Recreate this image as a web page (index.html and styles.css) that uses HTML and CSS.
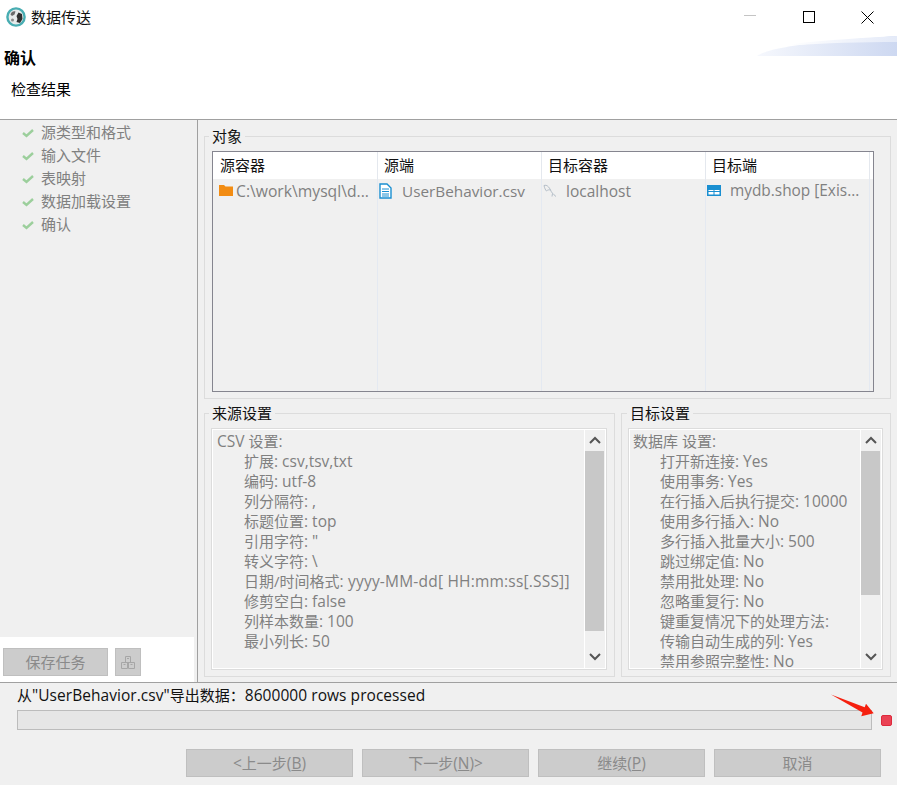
FILE: index.html
```html
<!DOCTYPE html>
<html lang="zh">
<head>
<meta charset="utf-8">
<title>数据传送</title>
<link rel="stylesheet" href="styles.css">
</head>
<body>
<div class="window">
  <header class="header">
    <svg class="swoosh" width="140" height="20" viewBox="0 0 140 20" aria-hidden="true">
      <defs>
        <linearGradient id="sw" x1="0" x2="1" y1="0" y2="0"><stop offset="0" stop-color="#f6f8fd"/><stop offset="1" stop-color="#cdd8f1"/></linearGradient>
        <linearGradient id="sw2" x1="0" x2="1" y1="0" y2="0"><stop offset="0" stop-color="#ffffff"/><stop offset="1" stop-color="#e4eaf8"/></linearGradient>
      </defs>
      <path d="M0 20 C12 12 43 7 140 0 V20 Z" fill="url(#sw)"/>
      <path d="M43 7 C70 4 105 2 140 0 V6 C105 6 70 7 30 9.5 Z" fill="url(#sw2)"/>
    </svg>
    <div class="titlebar">
      <svg class="app-icon" width="20" height="20" viewBox="0 0 20 20" aria-hidden="true">
        <circle cx="10" cy="10" r="8.6" fill="#e6eaea" stroke="#48adb2" stroke-width="2.4"/>
        <path d="M4.5 7.5 C5 4.5 8 3.5 9.5 4.5 L8.5 7.5 L6 9 Z" fill="#6a6a6a"/>
        <path d="M10.5 9 L12.5 5.5 L16 7 L16.5 12 L14 16 L10.5 15 L11.5 12 Z" fill="#2f2f2f"/>
        <circle cx="6.5" cy="13" r="1.5" fill="#8a8a8a"/>
      </svg>
      <span class="title">数据传送</span>
      <div class="win-controls">
        <svg class="win-btn" width="13" height="13" viewBox="0 0 13 13" aria-hidden="true"><path d="M0 4.5 H12" stroke="#c4c4c4" stroke-width="1"/></svg>
        <svg class="win-btn" width="13" height="13" viewBox="0 0 13 13" aria-hidden="true"><rect x="0.5" y="0.5" width="11" height="11" fill="none" stroke="#000" stroke-width="1"/></svg>
        <svg class="win-btn" width="13" height="13" viewBox="0 0 13 13" aria-hidden="true"><path d="M0.5 0.5 L12.5 12.5 M12.5 0.5 L0.5 12.5" stroke="#000" stroke-width="1"/></svg>
      </div>
    </div>
    <h1 class="page-title">确认</h1>
    <p class="page-sub">检查结果</p>
  </header>

  <div class="main">
    <aside class="sidebar">
      <ul class="steps">
        <li class="step"><svg class="check" width="12" height="10" viewBox="0 0 12 10" aria-hidden="true"><path d="M1 5 L4.5 8 L11 2" fill="none" stroke="#9ccf9c" stroke-width="2.4"/></svg>源类型和格式</li>
        <li class="step"><svg class="check" width="12" height="10" viewBox="0 0 12 10" aria-hidden="true"><path d="M1 5 L4.5 8 L11 2" fill="none" stroke="#9ccf9c" stroke-width="2.4"/></svg>输入文件</li>
        <li class="step"><svg class="check" width="12" height="10" viewBox="0 0 12 10" aria-hidden="true"><path d="M1 5 L4.5 8 L11 2" fill="none" stroke="#9ccf9c" stroke-width="2.4"/></svg>表映射</li>
        <li class="step"><svg class="check" width="12" height="10" viewBox="0 0 12 10" aria-hidden="true"><path d="M1 5 L4.5 8 L11 2" fill="none" stroke="#9ccf9c" stroke-width="2.4"/></svg>数据加载设置</li>
        <li class="step"><svg class="check" width="12" height="10" viewBox="0 0 12 10" aria-hidden="true"><path d="M1 5 L4.5 8 L11 2" fill="none" stroke="#9ccf9c" stroke-width="2.4"/></svg>确认</li>
      </ul>
      <div class="save-area">
        <button class="btn btn-save" type="button">保存任务</button>
        <button class="btn btn-icon" type="button" aria-label="保存">
          <svg width="16" height="15" viewBox="0 0 16 15" aria-hidden="true"><path d="M5.5 1.5 H10.5 V7.5 H5.5 Z M7 3.5 H9 M1.5 7.5 H7.5 V13.5 H1.5 Z M8.5 7.5 H14.5 V13.5 H8.5 Z M3.5 9.5 H5.5 M10.5 9.5 H12.5" fill="none" stroke="#a6a6a6"/></svg>
        </button>
      </div>
    </aside>

    <section class="content">
      <fieldset class="group group-objects">
        <legend class="legend">对象</legend>
        <div class="table">
          <div class="thead">
            <div class="th">源容器</div>
            <div class="th">源端</div>
            <div class="th">目标容器</div>
            <div class="th">目标端</div>
          </div>
          <div class="tbody">
            <div class="td td-folder">
              <svg class="cell-icon" width="14" height="12" viewBox="0 0 14 12" aria-hidden="true"><path d="M0 1 H5 L6.5 2.5 H14 V12 H0 Z" fill="#f28c13"/></svg>
              <span class="cell-text">C:\work\mysql\d...</span>
            </div>
            <div class="td td-file">
              <svg class="cell-icon" width="13" height="16" viewBox="0 0 13 16" aria-hidden="true"><path d="M1 1 H8 L12 5 V15 H1 Z" fill="#fff" stroke="#1a8fd1" stroke-width="1.4"/><path d="M3 6 H10 M3 8.5 H10 M3 11 H10 M3 13 H10" stroke="#1a8fd1" stroke-width="1"/></svg>
              <span class="cell-text">UserBehavior.csv</span>
            </div>
            <div class="td td-host">
              <svg class="cell-icon" width="14" height="14" viewBox="0 0 14 14" aria-hidden="true"><path d="M1 1.5 C4 0.5 6 3 7.5 6 C8.5 8.5 10 10 13 12.5 M1 1.5 C1.5 4 2.5 6 3.5 7 C4.5 6 6 5.5 7.5 6 M9.5 9.5 L9 12.5" fill="none" stroke="#b4bec8" stroke-width="1"/></svg>
              <span class="cell-text">localhost</span>
            </div>
            <div class="td td-table">
              <svg class="cell-icon" width="14" height="11" viewBox="0 0 14 11" aria-hidden="true"><path d="M0 0 H14 V11 H0 Z" fill="#1a8fd1"/><path d="M1.5 5 H6.5 V6 H1.5 Z M7.5 5 H12.5 V6 H7.5 Z M1.5 7 H6.5 V9.5 H1.5 Z M7.5 7 H12.5 V9.5 H7.5 Z" fill="#fff"/></svg>
              <span class="cell-text">mydb.shop [Exis...</span>
            </div>
          </div>
        </div>
      </fieldset>

      <div class="settings">
        <fieldset class="group group-settings group-source">
          <legend class="legend">来源设置</legend>
          <div class="textbox">
            <div class="lines">
              <div><span class="lat">CSV</span> 设置<span class="lat">:</span></div>
              <div class="indent">扩展<span class="lat">: csv,tsv,txt</span></div>
              <div class="indent">编码<span class="lat">: utf-8</span></div>
              <div class="indent">列分隔符<span class="lat">: ,</span></div>
              <div class="indent">标题位置<span class="lat">: top</span></div>
              <div class="indent">引用字符<span class="lat">: "</span></div>
              <div class="indent">转义字符<span class="lat">: \</span></div>
              <div class="indent">日期/时间格式<span class="lat lat-wide">: yyyy-MM-dd[ HH:mm:ss[.SSS]]</span></div>
              <div class="indent">修剪空白<span class="lat">: false</span></div>
              <div class="indent">列样本数量<span class="lat">: 100</span></div>
              <div class="indent">最小列长<span class="lat">: 50</span></div>
            </div>
            <div class="scrollbar">
              <svg class="arrow" width="12" height="8" viewBox="0 0 12 8" aria-hidden="true"><path d="M1 7 L6 2 L11 7" fill="none" stroke="#555" stroke-width="2"/></svg>
              <div class="track"><div class="thumb thumb-source"></div></div>
              <svg class="arrow" width="12" height="8" viewBox="0 0 12 8" aria-hidden="true"><path d="M1 1 L6 6 L11 1" fill="none" stroke="#555" stroke-width="2"/></svg>
            </div>
          </div>
        </fieldset>
        <fieldset class="group group-settings group-target">
          <legend class="legend">目标设置</legend>
          <div class="textbox">
            <div class="lines">
              <div>数据库 设置<span class="lat">:</span></div>
              <div class="indent">打开新连接<span class="lat">: Yes</span></div>
              <div class="indent">使用事务<span class="lat">: Yes</span></div>
              <div class="indent">在行插入后执行提交<span class="lat">: 10000</span></div>
              <div class="indent">使用多行插入<span class="lat">: No</span></div>
              <div class="indent">多行插入批量大小<span class="lat">: 500</span></div>
              <div class="indent">跳过绑定值<span class="lat">: No</span></div>
              <div class="indent">禁用批处理<span class="lat">: No</span></div>
              <div class="indent">忽略重复行<span class="lat">: No</span></div>
              <div class="indent">键重复情况下的处理方法<span class="lat">:</span></div>
              <div class="indent">传输自动生成的列<span class="lat">: Yes</span></div>
              <div class="indent">禁用参照完整性<span class="lat">: No</span></div>
            </div>
            <div class="scrollbar">
              <svg class="arrow" width="12" height="8" viewBox="0 0 12 8" aria-hidden="true"><path d="M1 7 L6 2 L11 7" fill="none" stroke="#555" stroke-width="2"/></svg>
              <div class="track"><div class="thumb thumb-target"></div></div>
              <svg class="arrow" width="12" height="8" viewBox="0 0 12 8" aria-hidden="true"><path d="M1 1 L6 6 L11 1" fill="none" stroke="#555" stroke-width="2"/></svg>
            </div>
          </div>
        </fieldset>
      </div>
    </section>
  </div>

  <footer class="footer">
    <div class="status">从<span class="lat lat-status">"UserBehavior.csv"</span>导出数据：<span class="lat lat-status">8600000 rows processed</span></div>
    <div class="progress-row">
      <div class="progress"></div>
      <div class="stop"></div>
      <svg class="red-arrow" width="44" height="24" viewBox="0 0 44 24" aria-hidden="true"><path d="M0 0.5 L33.7 13.3 L35 9.7 L42.7 19.3 L30.3 22.3 L31.5 18.5 Z" fill="#f5200f"/></svg>
    </div>
    <div class="actions">
      <button class="btn btn-action" type="button"><span class="lat">&lt;</span>上一步<span class="lat">(<u>B</u>)</span></button>
      <button class="btn btn-action" type="button">下一步<span class="lat">(<u>N</u>)&gt;</span></button>
      <button class="btn btn-action" type="button">继续<span class="lat">(<u>P</u>)</span></button>
      <button class="btn btn-action" type="button">取消</button>
    </div>
  </footer>
</div>
</body>
</html>
```
FILE: styles.css
```css
* { box-sizing: border-box; }
html, body { margin: 0; padding: 0; }
body {
  width: 897px;
  height: 785px;
  overflow: hidden;
  background: #f0f0f0;
  font-family: "Open Sans", "Noto Sans CJK SC", sans-serif;
  font-size: 15px;
  color: #000;
}
.window { width: 897px; height: 785px; display: flex; flex-direction: column; }
.lat { font-size: 15.5px; }
.lat-wide { letter-spacing: 0.2px; }
.lat-status { letter-spacing: 0.05px; }

.header {
  position: relative;
  height: 120px;
  flex: none;
  background: #fff;
  border-bottom: 1px solid #a0a0a0;
}
.swoosh { position: absolute; right: 0; top: 36px; }
.titlebar { height: 36px; display: flex; align-items: center; padding: 0 0 2px 6px; }
.app-icon { margin-right: 5px; }
.title { font-size: 15px; line-height: 20px; color: #111; }
.win-controls { margin-left: auto; align-self: flex-start; padding: 11px 23px 0 0; display: flex; gap: 45.5px; }
.win-btn { display: block; }
.page-title { margin: 10px 0 0 4px; font-size: 16px; line-height: 24px; font-weight: 700; }
.page-sub { margin: 8px 0 0 11px; font-size: 15px; line-height: 22px; }

.main { flex: none; height: 563px; display: flex; border-bottom: 1px solid #a0a0a0; }
.sidebar {
  width: 198px;
  flex: none;
  border-right: 1px solid #a0a0a0;
  display: flex;
  flex-direction: column;
  justify-content: space-between;
}
.steps { list-style: none; margin: 0; padding: 1px 0 0 22px; }
.step { height: 23px; display: flex; align-items: center; color: #808080; font-size: 15px; line-height: 23px; }
.check { margin-right: 7px; flex: none; }
.save-area {
  width: 194px;
  height: 45px;
  background: #fff;
  padding: 11px 0 0 3px;
  display: flex;
  align-items: flex-start;
  gap: 7px;
}

.btn {
  height: 28px;
  padding: 0;
  background: #cccccc;
  border: 1px solid #bfbfbf;
  color: #8a8a8a;
  font-family: inherit;
  font-size: 15px;
  line-height: 24px;
  display: flex;
  align-items: center;
  justify-content: center;
}
.btn-save { width: 105px; }
.btn-icon { width: 26px; }
.btn-action { width: 167px; }
.btn u { text-decoration: underline; }

.content { flex: 1; padding: 8px 6px 6px 6px; display: flex; flex-direction: column; min-width: 0; }
.group {
  margin: 0;
  padding: 0;
  min-width: 0;
  border: 1px solid #dcdcdc;
}
.legend { padding: 0 3px; font-size: 15px; line-height: 16px; height: 16px; color: #111; }
.group-objects { height: 271px; padding: 7px 16px 6px 7px; flex: none; }
.group-objects .legend { margin-left: -3px; }
.table { height: 241px; border: 1px solid #85858f; background: #f0f0f0; display: flex; flex-direction: column; }
.thead { height: 27px; flex: none; background: #fff; display: grid; grid-template-columns: 165px 164px 164px 164px 1fr; }
.th { padding-left: 6px; line-height: 27px; font-size: 15px; border-right: 1px solid #e4e8ee; color: #111; }
.th:first-child { padding-left: 7px; }
.tbody { flex: 1; display: grid; grid-template-columns: 165px 164px 164px 164px 1fr; }
.td {
  height: 100%;
  border-right: 1px solid #e4e9f1;
  display: flex;
  align-items: flex-start;
  padding-top: 1px;
  padding-left: 1px;
  color: #808080;
  white-space: nowrap;
  overflow: hidden;
}
.cell-icon { flex: none; margin-top: 4px; }
.cell-text { line-height: 22px; font-size: 15.3px; }
.td-folder { padding-left: 6px; }
.td-folder .cell-text { margin-left: 3px; font-size: 15.7px; }
.td-file .cell-text { margin-left: 10px; }
.td-file .cell-icon { margin-top: 3px; }
.td-host .cell-text { margin-left: 9px; font-size: 15.5px; }
.td-table .cell-text { margin-left: 9px; font-size: 15.4px; }
.td-table .cell-icon { margin-top: 5px; }

.settings { flex: none; height: 272px; margin-top: 6px; display: grid; grid-template-columns: 411px 270px; gap: 6px; }
.group-settings { height: 272px; padding: 7px 7px 6px 6px; }
.group-settings .legend { margin-left: -2px; }
.group-target .legend { margin-left: -1px; }
.group-source { padding-right: 7px; }
.textbox {
  height: 242px;
  background: #f0f0f0;
  border: 1px solid #dcdcdc;
  outline: 1px solid #fff;
  outline-offset: -2px;
  display: flex;
  overflow: hidden;
}
.lines { flex: 1; min-width: 0; padding: 2px 0 0 5px; color: #808080; line-height: 20px; white-space: nowrap; overflow: hidden; }
.group-target .lines { padding-left: 4px; }
.lines > div { height: 20px; }
.indent { padding-left: 27px; }
.scrollbar { width: 22px; flex: none; border-left: 1px solid #fff; display: flex; flex-direction: column; align-items: center; padding: 7px 2px 8px 0; }
.arrow { flex: none; display: block; }
.track { flex: 1; width: 19px; margin: 7px 0 6px; }
.thumb { background: #c8c8c8; width: 100%; }
.thumb-source { height: 180px; }
.thumb-target { height: 144px; }

.footer { flex: 1; padding: 0 5px 0 17px; }
.status { line-height: 22px; margin-top: 1px; color: #111; }
.progress-row { position: relative; display: flex; align-items: center; margin-top: 4px; }
.progress { width: 855px; height: 20px; background: #e6e6e6; border: 1px solid #bcbcbc; }
.stop {
  width: 11px;
  height: 11px;
  margin-left: 9px;
  background: #ea4254;
  border: 1px solid #de2a3c;
  border-radius: 2px;
}
.red-arrow { position: absolute; left: 814px; top: -16px; }
.actions { display: flex; gap: 9px; margin: 19px 0 0 169px; }
```
